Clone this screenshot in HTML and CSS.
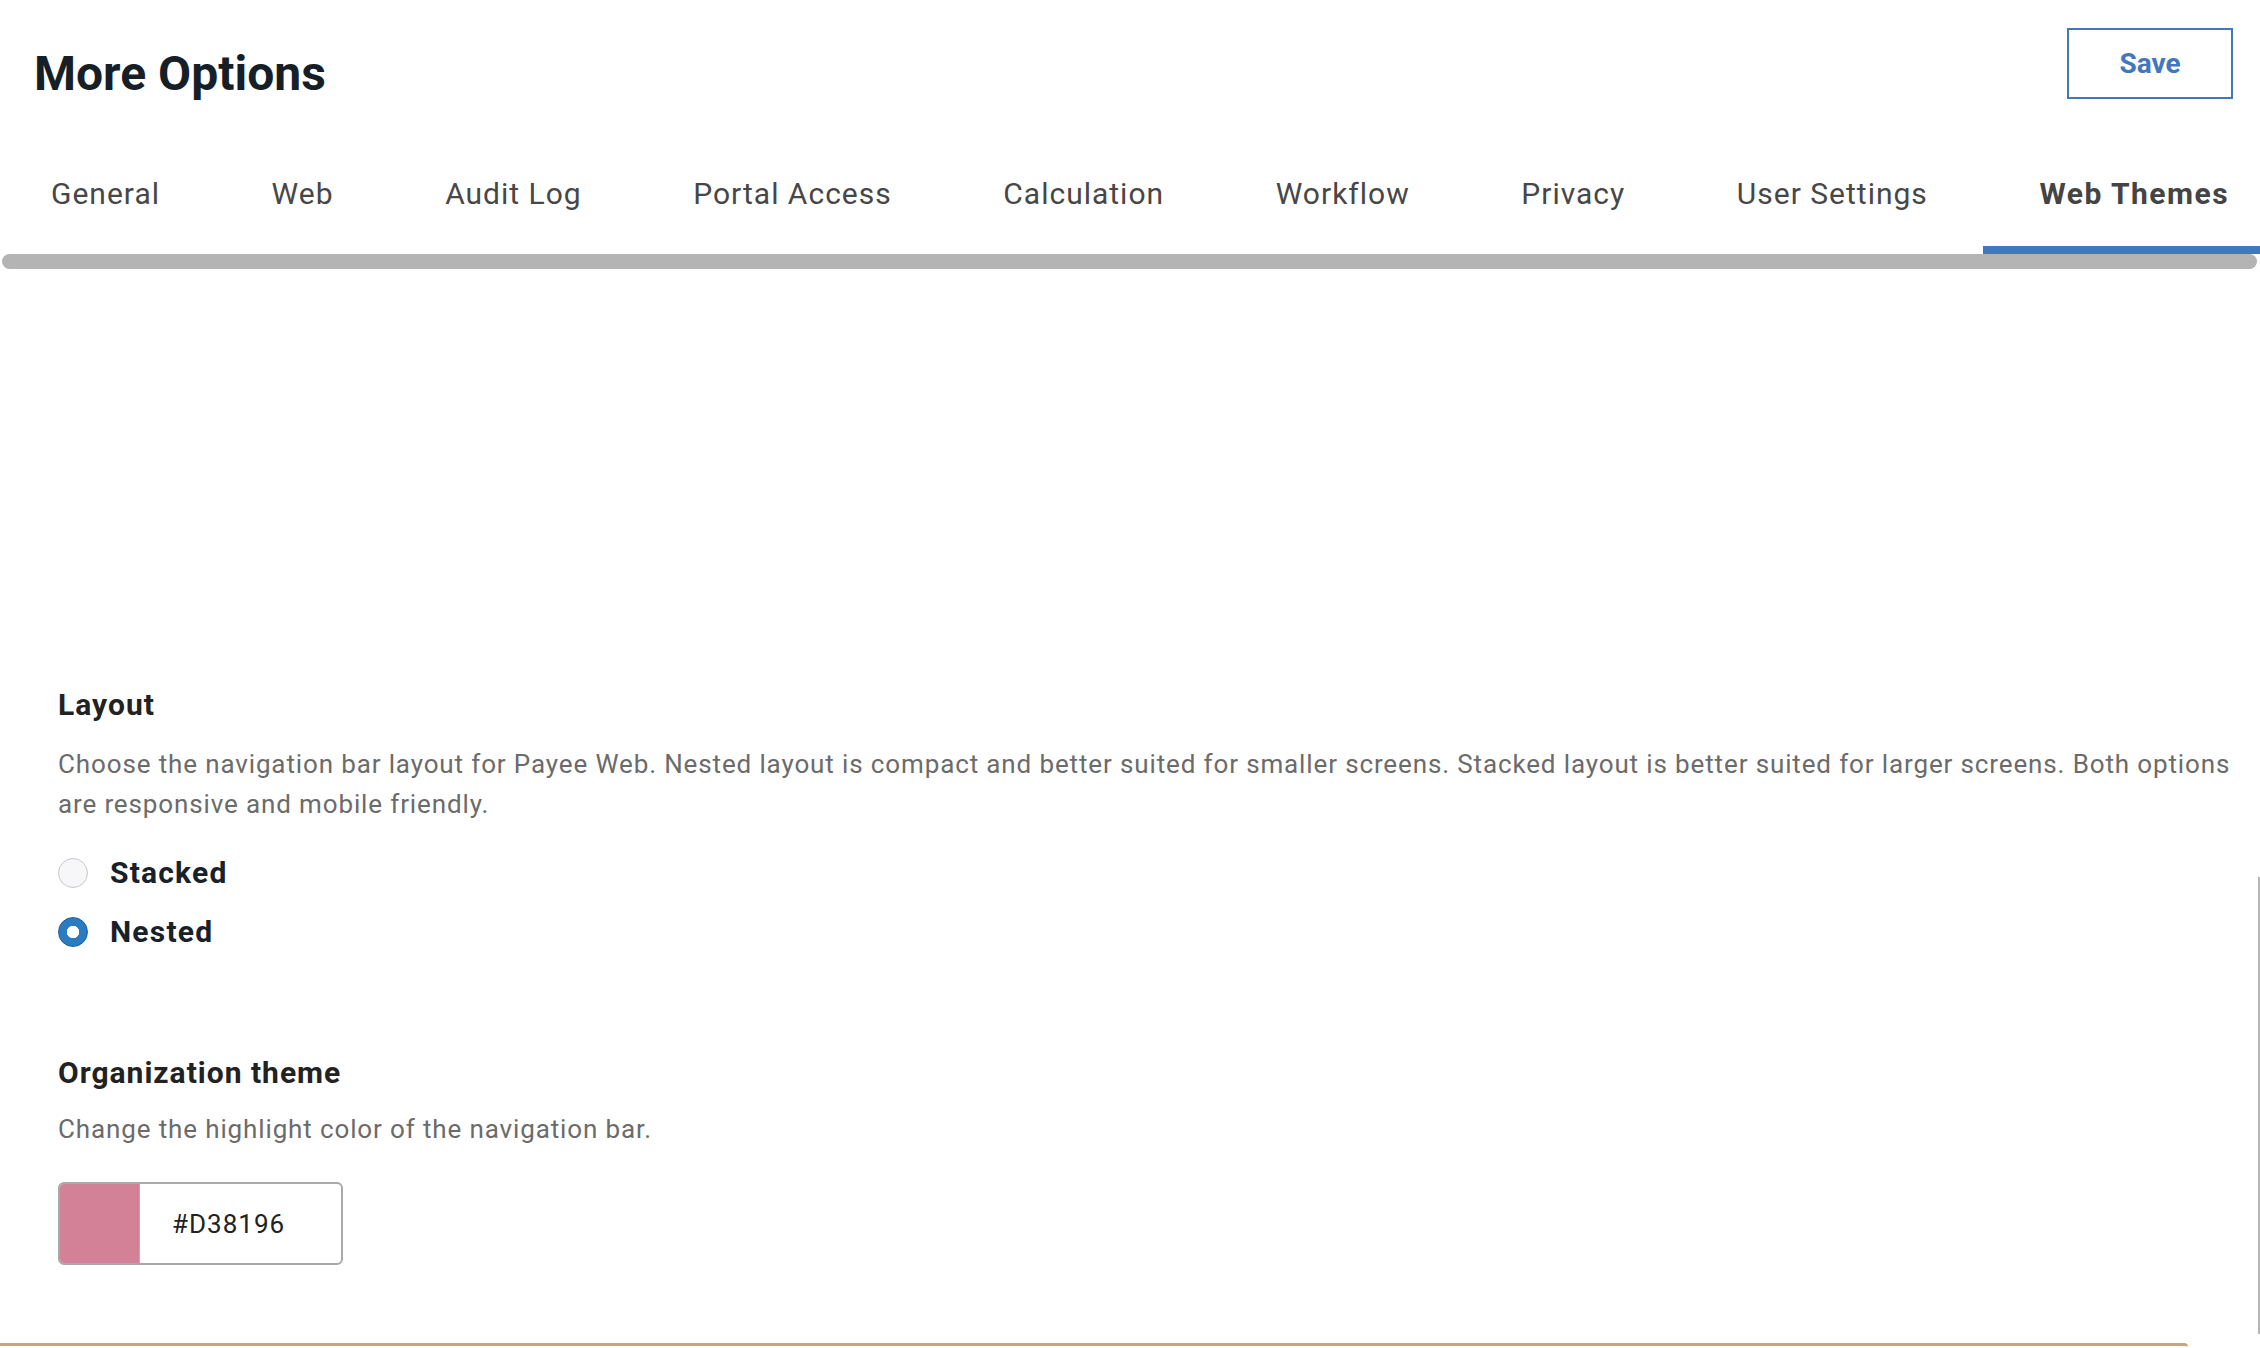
FILE: index.html
```html
<!DOCTYPE html>
<html lang="en">

<head>
    <meta charset="UTF-8">
    <meta name="viewport" content="width=device-width, initial-scale=1.0">
    <link rel="stylesheet" href="styles.css">
    <title>More Options</title>
</head>

<body>
    <div class="page">
        <header class="top-bar">
            <h1>More Options</h1>
            <button type="button" class="save-button">Save</button>
        </header>

        <nav class="tabs">
            <ul class="tab-list">
                <li class="tab">General</li>
                <li class="tab">Web</li>
                <li class="tab">Audit Log</li>
                <li class="tab">Portal Access</li>
                <li class="tab">Calculation</li>
                <li class="tab">Workflow</li>
                <li class="tab">Privacy</li>
                <li class="tab">User Settings</li>
                <li class="tab active">Web Themes</li>
            </ul>
            <div class="tab-scroll"></div>
        </nav>

        <main class="content">
            <section class="setting">
                <h2>Layout</h2>
                <p class="hint">Choose the navigation bar layout for Payee Web. Nested layout is compact and better suited for smaller screens. Stacked layout is better suited for larger screens. Both options are responsive and mobile friendly.</p>
                <div class="options">
                    <label class="option"><input type="radio" name="layout" value="stacked"> Stacked</label>
                    <label class="option"><input type="radio" name="layout" value="nested" checked> Nested</label>
                </div>
            </section>

            <section class="setting theme">
                <h2>Organization theme</h2>
                <p class="hint">Change the highlight color of the navigation bar.</p>
                <div class="color-field">
                    <span class="swatch"></span>
                    <span class="color-value">#D38196</span>
                </div>
            </section>
        </main>

        <div class="footer-edge"></div>
        <!-- scroll indicator of the settings pane -->
        <div class="pane-scroll"></div>
    </div>
</body>

</html>
```

FILE: styles.css
```css
body {
    margin: 0;
    font-family: Roboto, "Liberation Sans", Arial, sans-serif;
    background: #ffffff;
    overflow: hidden;
}

.page {
    position: relative;
    min-height: 1348px;
}

/* header */
.top-bar {
    display: flex;
    justify-content: space-between;
    align-items: flex-start;
    padding: 28px 27px 0 34px;
}

h1 {
    margin: 18px 0 0;
    font-size: 48px;
    line-height: 56px;
    font-weight: 700;
    color: #161f28;
}

.save-button {
    width: 166px;
    height: 71px;
    border: 2px solid #4277c0;
    background: #ffffff;
    color: #4277c0;
    font-family: inherit;
    font-size: 28px;
    font-weight: 700;
    cursor: pointer;
}

/* tabs */
.tabs {
    overflow: hidden;
}

.tab-list {
    display: flex;
    list-style: none;
    margin: 0 0 0 -5px;
    padding: 74px 0 0;
    white-space: nowrap;
}

.tab {
    flex-shrink: 0;
    padding: 0 55.6px 34px 56px;
    border-bottom: 8px solid transparent;
    font-size: 30px;
    line-height: 36px;
    letter-spacing: 1px;
    color: #474747;
    cursor: pointer;
}

.tab.active {
    font-weight: 700;
    letter-spacing: 1.5px;
    color: #444444;
    border-bottom-color: #4277c0;
}

.tab-scroll {
    height: 15px;
    margin: 0 3px 0 2px;
    background: #b4b4b4;
    border-radius: 8px;
}

/* settings */
.content {
    padding: 418px 0 0 58px;
}

h2 {
    margin: 0;
    font-size: 30px;
    line-height: 36px;
    font-weight: 700;
    letter-spacing: 1px;
    color: #222222;
}

.hint {
    margin: 21px 0 0;
    font-size: 26px;
    line-height: 40px;
    letter-spacing: 0.87px;
    color: #6b6b6b;
}

.options {
    display: flex;
    flex-direction: column;
    gap: 23px;
    margin-top: 31px;
}

.option {
    display: flex;
    align-items: center;
    gap: 22px;
    font-size: 30px;
    line-height: 36px;
    font-weight: 700;
    letter-spacing: 1.2px;
    color: #18202a;
}

.option input {
    appearance: none;
    width: 30px;
    height: 30px;
    margin: 0;
    border: 1px solid #c8c8c8;
    border-radius: 50%;
    background: #f7f7f9;
}

.option input:checked {
    border-color: #1d5e96;
    background: radial-gradient(circle, #ffffff 0 6px, #2a7bbf 6.5px);
}

.theme {
    margin-top: 105px;
}

.theme .hint {
    margin-top: 18px;
}

.color-field {
    display: flex;
    width: 285px;
    height: 83px;
    box-sizing: border-box;
    margin-top: 33px;
    border: 2px solid #a9a9a9;
    border-radius: 6px;
    overflow: hidden;
}

.swatch {
    width: 79px;
    background: #d38196;
    border-right: 1px solid #b0b0b0;
}

.color-value {
    align-self: center;
    padding-left: 32px;
    font-size: 26px;
    line-height: 40px;
    letter-spacing: 1px;
    color: #222222;
}

.footer-edge {
    width: 2188px;
    height: 2px;
    margin-top: 78px;
    border-top: 3px solid #c9a57d;
    border-top-right-radius: 4px;
}

.pane-scroll {
    position: absolute;
    top: 877px;
    right: 0;
    width: 2px;
    height: 457px;
    background: #b5b5b5;
}
```
